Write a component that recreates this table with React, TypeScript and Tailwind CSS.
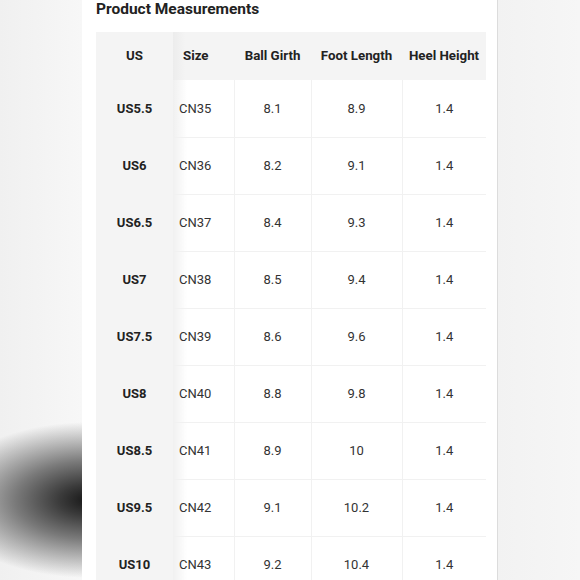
// 580x580 のサイズ表スクリーンショット
const rows = [
  ['US5.5', 'CN35', '8.1', '8.9', '1.4'],
  ['US6', 'CN36', '8.2', '9.1', '1.4'],
  ['US6.5', 'CN37', '8.4', '9.3', '1.4'],
  ['US7', 'CN38', '8.5', '9.4', '1.4'],
  ['US7.5', 'CN39', '8.6', '9.6', '1.4'],
  ['US8', 'CN40', '8.8', '9.8', '1.4'],
  ['US8.5', 'CN41', '8.9', '10', '1.4'],
  ['US9.5', 'CN42', '9.1', '10.2', '1.4'],
  ['US10', 'CN43', '9.2', '10.4', '1.4'],
];

export default function App() {
  return (
    <div
      className="flex h-[580px] w-[580px] overflow-hidden bg-[#f4f4f4]"
      style={{ fontFamily: 'Roboto, "Liberation Sans", sans-serif' }}
    >
      {/* 左側: ぼかし背景 (下に黒い影) */}
      <div className="h-full w-[82px] shrink-0 bg-[radial-gradient(ellipse_150px_78px_at_90px_500px,#151515_0%,#3a3a3a_20%,#7a7a7a_50%,rgba(245,245,245,0)_100%),linear-gradient(to_right,#f0f0f0,#f7f7f7)]" />

      {/* 中央のカード */}
      <div className="h-full w-[416px] shrink-0 border-r border-[#dcdcdc] bg-white pl-[14px]">
        <h2 className="h-[32px] text-[15.5px] font-bold leading-[18px] text-[#222]">
          Product Measurements
        </h2>

        <table className="w-[390px] table-fixed border-collapse text-[13px]">
          <colgroup>
            <col className="w-[77px]" />
            <col className="w-[61px]" />
            <col className="w-[77px]" />
            <col className="w-[91px]" />
            <col className="w-[84px]" />
          </colgroup>
          <thead>
            <tr className="h-[48px] bg-[#f4f4f4] text-[13.3px] text-[#222]">
              <th className="text-center font-bold">US</th>
              <th className="bg-[linear-gradient(to_right,#ececec,#f4f4f4_12px)] pl-[10px] text-left font-bold">
                Size
              </th>
              <th className="text-center font-bold">Ball Girth</th>
              <th className="text-center font-bold">Foot Length</th>
              <th className="text-center font-bold">Heel Height</th>
            </tr>
          </thead>
          <tbody className="text-[#333]">
            {rows.map((r) => (
              <tr key={r[0]} className="h-[57px]">
                <td className="bg-[#f4f4f4] text-center font-bold text-[#222]">{r[0]}</td>
                <td className="border-b border-[#f1f1f1] bg-[linear-gradient(to_right,#f0f0f0,#ffffff_14px)] pl-[6px]">
                  {r[1]}
                </td>
                <td className="border-b border-l border-[#f1f1f1] text-center">{r[2]}</td>
                <td className="border-b border-l border-[#f1f1f1] text-center">{r[3]}</td>
                <td className="border-b border-l border-[#f1f1f1] text-center">{r[4]}</td>
              </tr>
            ))}
          </tbody>
        </table>
      </div>

      {/* 右側: 淡いグレー背景 */}
      <div className="h-full flex-1 bg-[linear-gradient(to_right,#f2f2f2,#f6f6f6)]" />
    </div>
  );
}
